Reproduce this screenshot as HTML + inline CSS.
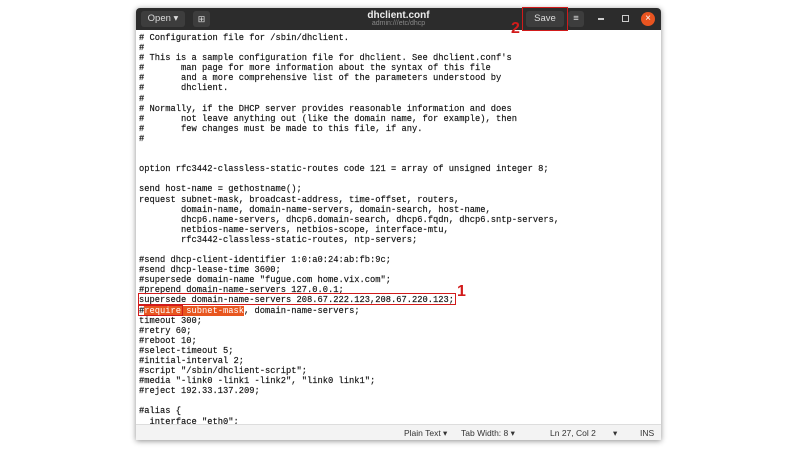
<!DOCTYPE html>
<html><head><style>
body{margin:0;width:800px;height:450px;background:#fff;position:relative;overflow:hidden;font-family:"Liberation Sans",sans-serif}
.win{position:absolute;left:136px;top:8px;width:525px;height:432px;background:#fff;box-shadow:0 1px 6px rgba(0,0,0,.45);border-radius:4px 4px 0 0;overflow:hidden}
.hdr{position:absolute;left:0;top:0;width:525px;height:22px;background:#2c2c2c}
.btn{position:absolute;top:3px;height:16px;background:#3d3d3d;border-radius:3px;color:#ddd;font-size:9.5px;line-height:16px;text-align:center}
.code{position:absolute;left:3px;top:25px;font-family:"Liberation Mono",monospace;font-size:8.75px;line-height:10.1px;color:#111;white-space:pre;-webkit-text-stroke:0.15px #111}
.status{position:absolute;left:0;top:416px;width:525px;height:16px;background:#f3f3f3;border-top:1px solid #ddd;font-size:8.5px;color:#333;line-height:16px}
.status span{position:absolute}
.red{position:absolute;border:1.3px solid #d21b1b}
.num{position:absolute;color:#d21b1b;font-weight:bold;font-size:16px;font-family:"Liberation Sans",sans-serif}
.hl{background:#e8561f;color:#fff;-webkit-text-stroke:0}
</style></head><body>
<div class="win">
<div class="hdr">
<div class="btn" style="left:5px;width:44px">Open ▾</div>
<div class="btn" style="left:57px;width:17px;font-size:9px">⊞</div>
<div style="position:absolute;left:0;width:525px;top:2px;text-align:center;color:#eee;font-size:10px;font-weight:bold;line-height:11px">dhclient.conf</div>
<div style="position:absolute;left:0;width:525px;top:12px;text-align:center;color:#888;font-size:7px;line-height:8px">admin:///etc/dhcp</div>
<div class="btn" style="left:390px;width:38px">Save</div>
<div class="btn" style="left:432px;width:16px">≡</div>
<div style="position:absolute;left:462px;top:10px;width:6px;height:1.5px;background:#ccc"></div>
<div style="position:absolute;left:486px;top:7px;width:5px;height:5px;border:1.3px solid #ccc"></div>
<div style="position:absolute;left:505px;top:4px;width:14px;height:14px;border-radius:50%;background:#e95420;color:#fff;font-size:10px;line-height:14px;text-align:center">×</div>
</div>
<div class="code"># Configuration file for /sbin/dhclient.
#
# This is a sample configuration file for dhclient. See dhclient.conf's
#       man page for more information about the syntax of this file
#       and a more comprehensive list of the parameters understood by
#       dhclient.
#
# Normally, if the DHCP server provides reasonable information and does
#       not leave anything out (like the domain name, for example), then
#       few changes must be made to this file, if any.
#


option rfc3442-classless-static-routes code 121 = array of unsigned integer 8;

send host-name = gethostname();
request subnet-mask, broadcast-address, time-offset, routers,
        domain-name, domain-name-servers, domain-search, host-name,
        dhcp6.name-servers, dhcp6.domain-search, dhcp6.fqdn, dhcp6.sntp-servers,
        netbios-name-servers, netbios-scope, interface-mtu,
        rfc3442-classless-static-routes, ntp-servers;

#send dhcp-client-identifier 1:0:a0:24:ab:fb:9c;
#send dhcp-lease-time 3600;
#supersede domain-name "fugue.com home.vix.com";
#prepend domain-name-servers 127.0.0.1;
supersede domain-name-servers 208.67.222.123,208.67.220.123;
#<span class="hl">require subnet-mask</span>, domain-name-servers;
timeout 300;
#retry 60;
#reboot 10;
#select-timeout 5;
#initial-interval 2;
#script "/sbin/dhclient-script";
#media "-link0 -link1 -link2", "link0 link1";
#reject 192.33.137.209;

#alias {
  interface "eth0";</div>
<div class="status">
<span style="left:268px">Plain Text ▾</span>
<span style="left:325px">Tab Width: 8 ▾</span>
<span style="left:414px">Ln 27, Col 2</span>
<span style="left:477px">▾</span>
<span style="left:504px">INS</span>
</div>
</div>
<div class="red" style="left:522px;top:7px;width:44px;height:22px"></div>
<div class="num" style="left:511px;top:20px">2</div>
<div class="red" style="left:138px;top:293px;width:316px;height:10px"></div>
<div class="red" style="left:138px;top:305px;width:43px;height:9px"></div>
<div class="num" style="left:457px;top:283px">1</div>
</body></html>
